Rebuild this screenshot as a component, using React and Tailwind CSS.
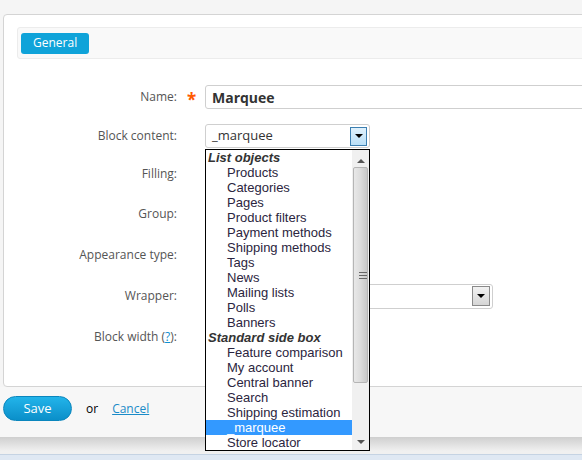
import React from 'react'

const ui = { fontFamily: '"Open Sans", "Noto Sans", Tahoma, sans-serif' }
const sys = { fontFamily: '"Liberation Sans", Arial, sans-serif' }

const listItems = [
  { label: 'List objects', group: true },
  { label: 'Products' },
  { label: 'Categories' },
  { label: 'Pages' },
  { label: 'Product filters' },
  { label: 'Payment methods' },
  { label: 'Shipping methods' },
  { label: 'Tags' },
  { label: 'News' },
  { label: 'Mailing lists' },
  { label: 'Polls' },
  { label: 'Banners' },
  { label: 'Standard side box', group: true },
  { label: 'Feature comparison' },
  { label: 'My account' },
  { label: 'Central banner' },
  { label: 'Search' },
  { label: 'Shipping estimation' },
  { label: '_marquee', selected: true },
  { label: 'Store locator' },
]

const Arrow = ({ className = 'border-t-black' }) => (
  <span className={`block w-0 h-0 border-l-[4px] border-r-[4px] border-t-[4px] border-l-transparent border-r-transparent ${className}`} />
)

const Label = ({ children }) => (
  <div className="w-[173px] shrink-0 text-right text-[12px] text-[#555] leading-none" style={ui}>
    {children}
  </div>
)

const Row = ({ label, star, children, className = '' }) => (
  <div className={`flex items-center h-[24px] ${className}`}>
    <Label>{label}</Label>
    <div className="w-[28px] shrink-0 flex justify-center">
      {star && <span className="text-[#ff5a00] text-[17px] font-bold leading-none mt-[4px] ml-[1px]">*</span>}
    </div>
    <div className="flex-1">{children}</div>
  </div>
)

const Dropdown = () => (
  <div className="absolute -left-px top-[24px] w-[165px] h-[302px] bg-white border border-black flex z-10" style={sys}>
    <ul className="flex-1">
      {listItems.map((it) => (
        <li
          key={it.label}
          className={`h-[15px] leading-[15px] text-[13px] whitespace-nowrap ${
            it.group
              ? 'pl-[2px] font-bold italic text-[#333]'
              : it.selected
              ? 'pl-[21px] bg-[#3399ff] text-white'
              : 'pl-[21px] text-[#2b2540]'
          }`}
        >
          {it.label}
        </li>
      ))}
    </ul>
    <div className="w-[17px] bg-[#f0f0f0] flex flex-col items-center">
      <div className="h-[17px] flex items-center justify-center">
        <Arrow className="border-t-transparent border-b-[4px] border-b-[#555] border-t-0" />
      </div>
      <div className="w-[15px] h-[216px] rounded-[2px] border border-[#b5b5b5] bg-gradient-to-r from-[#e8e8e8] via-[#dcdcdc] to-[#c8c8c8] flex items-center justify-center">
        <div className="flex flex-col gap-[2px] ml-[4px]">
          <span className="block w-[8px] h-px bg-[#666]" />
          <span className="block w-[8px] h-px bg-[#666]" />
          <span className="block w-[8px] h-px bg-[#666]" />
        </div>
      </div>
      <div className="flex-1" />
      <div className="h-[17px] flex items-center justify-center">
        <Arrow className="border-t-[#555]" />
      </div>
    </div>
  </div>
)

export default function App() {
  return (
    <div className="w-[582px] h-[460px] overflow-hidden bg-[#f5f5f5] flex flex-col">
      <div className="h-[14px]" />
      <div className="ml-[3px] w-[640px] h-[373px] bg-white border border-[#d4d4d4] rounded-[4px] flex flex-col">
        <div className="mt-[12px] ml-[13px] h-[32px] bg-[#f9f9f9] border border-[#ececec] rounded-[3px] flex items-center pl-[3px]">
          <button
            className="h-[21px] px-[12px] rounded-[3px] bg-[#0fa3d9] text-white text-[12px] leading-none"
            style={ui}
          >
            General
          </button>
        </div>

        <div className="mt-[26px] flex flex-col">
          <Row label="Name:" star>
            <div className="w-[500px] h-[24px] border border-[#cfcfcf] rounded-[3px] flex items-center px-[6px] text-[14px] font-bold text-[#333]" style={ui}>
              Marquee
            </div>
          </Row>

          <Row label="Block content:" className="mt-[15px]">
            <div className="relative w-[165px] h-[24px] border border-[#cfcfcf] rounded-[3px] flex items-center pl-[6px] text-[13px] text-[#333]" style={ui}>
              <span className="flex-1">_marquee</span>
              <span className="mr-[2px] w-[17px] h-[19px] border border-[#3c7fb1] bg-gradient-to-b from-[#e0f1fc] to-[#b9dff7] flex items-center justify-center">
                <Arrow />
              </span>
              <Dropdown />
            </div>
          </Row>

          <Row label="Filling:" className="mt-[14px]" />
          <Row label="Group:" className="mt-[16px]" />
          <Row label="Appearance type:" className="mt-[17px]" />

          <Row label="Wrapper:" className="mt-[17px]">
            <div className="w-[288px] h-[25px] border border-[#cfcfcf] rounded-[3px] flex items-center justify-end pr-[2px]">
              <span className="w-[18px] h-[20px] border border-[#8a8a8a] bg-gradient-to-b from-[#f2f2f2] to-[#d6d6d6] flex items-center justify-center">
                <Arrow />
              </span>
            </div>
          </Row>

          <Row
            label={
              <>
                Block width (<span className="text-[#0f8fd0] underline">?</span>):
              </>
            }
            className="mt-[17px]"
          />
        </div>
      </div>

      <div className="h-[50px] bg-[#f7f7f7] flex items-start pt-[9px] pl-[3px] gap-[14px]" style={ui}>
        <button className="w-[69px] h-[25px] rounded-full bg-gradient-to-b from-[#22b4ea] to-[#0a8fc9] border border-[#0a86bd] text-white text-[13px] leading-none">
          Save
        </button>
        <span className="text-[12px] leading-[25px] text-black">or</span>
        <a className="text-[12px] leading-[25px] text-[#1a8bc8] underline">Cancel</a>
      </div>
      <div className="h-[14px] bg-gradient-to-b from-[#cfcfcf] to-[#f0f0f0]" />
      <div className="h-[3px] bg-[#f0f0f0]" />
      <div className="flex-1 bg-[#dfe8f3] border-t border-[#c5d3e3]" />
    </div>
  )
}
